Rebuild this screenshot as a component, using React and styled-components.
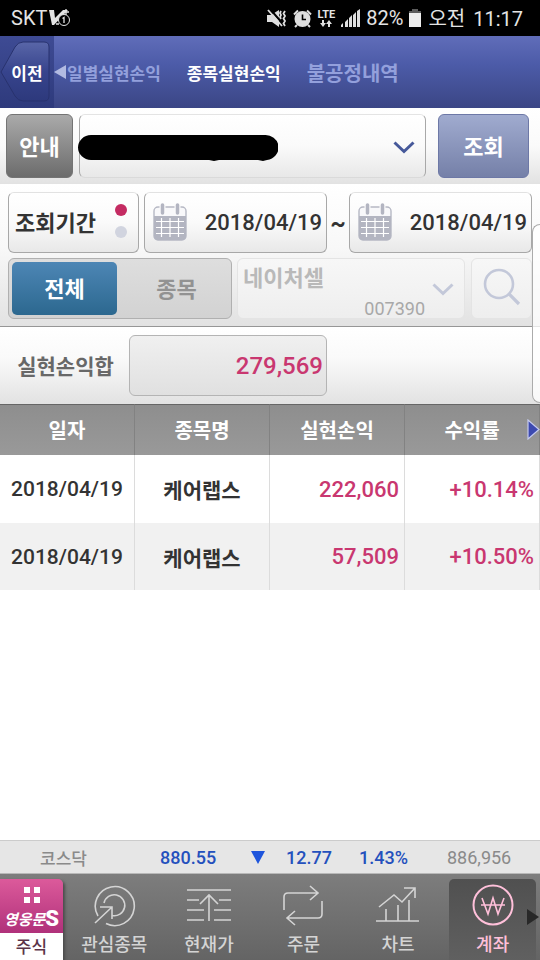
import React from "react";
import styled, { createGlobalStyle, css } from "styled-components";

const PageStyle = createGlobalStyle`
  *, *::before, *::after { box-sizing: border-box; }
  body { margin: 0; background: #fff; }
  body, button, input, select, a {
    font-family: Roboto, "Noto Sans CJK KR", sans-serif;
  }
  button, input, select { margin: 0; padding: 0; border: 0; background: none; }
  button { cursor: pointer; }
`;

const Screen = styled.div`
  min-height: 100vh;
  display: flex;
  flex-direction: column;
`;

/* ---------- status bar ---------- */

const StatusBar = styled.div`
  height: 36px;
  padding: 0 17px 0 11px;
  display: flex;
  align-items: center;
  justify-content: space-between;
  background: #000;
  color: #e4e4e4;
  font-size: 20px;
`;

const StatusGroup = styled.div`
  display: flex;
  align-items: center;
  gap: ${(p) => p.$gap}px;
`;

const Clock = styled.span`
  display: flex;
  align-items: baseline;
  gap: 8px;
  padding: 0 0 2px 1px;
  font-size: 20px;
`;

/* ---------- title bar ---------- */

const TitleBar = styled.header`
  height: 72px;
  display: flex;
  background: linear-gradient(#606db9, #4c5ba8 40%, #3b4685);
`;

const BackButton = styled.button`
  position: relative;
  width: 54px;
  background: linear-gradient(#3e4b94, #2e3a7c);
  color: #fff;
  font-size: 17px;
  font-weight: 700;
`;

const BackShape = styled.svg`
  position: absolute;
  inset: 0;
`;

const BackLabel = styled.span`
  position: relative;
`;

const Tabs = styled.nav`
  display: flex;
  align-items: center;
  gap: 26px;
`;

const Tab = styled.a`
  display: flex;
  align-items: center;
  color: ${(p) => (p.$active ? "#fff" : "#93a0dc")};
  font-size: ${(p) => (p.$wide ? 20 : 17)}px;
  font-weight: 700;
  text-decoration: none;
  white-space: nowrap;
`;

/* ---------- account bar ---------- */

const boxFrame = css`
  border: 1px solid #a8a8a8;
  border-radius: 6px;
  background: linear-gradient(#fff, #fafafa 50%, #e8e8e8);
`;

const AccountBar = styled.section`
  padding: 6px 11px 6px 6px;
  display: flex;
  background: linear-gradient(#fff, #fafafa 50%, #e2e2e2);
`;

const ActionButton = styled.button`
  width: ${(p) => p.$width}px;
  height: 64px;
  padding-bottom: 3px;
  border-radius: 6px;
  border: 1px solid ${(p) => (p.$primary ? "#6d78a6" : "#747474")};
  background: ${(p) =>
    p.$primary
      ? "linear-gradient(#a0abcf, #7580a8)"
      : "linear-gradient(#aaa, #6c6c6c)"};
  color: #fff;
  font-size: 22px;
  font-weight: 700;
`;

const AccountField = styled.div`
  position: relative;
  flex: 1;
  margin: 0 12px 0 6px;
  display: flex;
`;

const AccountSelect = styled.select`
  ${boxFrame}
  appearance: none;
  width: 100%;
  height: 64px;
  padding: 0 48px 0 12px;
  border-top-color: #e4e4e4;
  border-bottom-color: #dadada;
  font-size: 22px;
`;

const MaskedNumber = styled.svg`
  position: absolute;
  left: -1px;
  top: 20px;
`;

const FieldChevron = styled.svg`
  position: absolute;
  right: 11px;
  top: ${(p) => p.$top}px;
  pointer-events: none;
`;

/* ---------- search conditions ---------- */

const Conditions = styled.div`
  position: relative;
`;

const PeriodPanel = styled.section`
  padding: 8px 8px 7px;
  display: flex;
  flex-direction: column;
  gap: 5px;
  border-bottom: 1px solid #969696;
  background: linear-gradient(#fff, #f8f8f8 45%, #e2e2e2);
`;

const FieldRow = styled.div`
  display: flex;
  align-items: stretch;
  height: 61px;
`;

const PeriodButton = styled.button`
  ${boxFrame}
  width: 131px;
  margin-right: 5px;
  padding: 0 11px 3px 6px;
  border-top-color: #e2e2e2;
  display: flex;
  align-items: center;
  justify-content: space-between;
  color: #333;
  font-size: 22px;
  font-weight: 700;
`;

const DotPair = styled.span`
  display: flex;
  flex-direction: column;
  gap: 10px;
`;

const Dot = styled.span`
  width: 12px;
  height: 12px;
  border-radius: 50%;
  background: ${(p) => (p.$on ? "#c42b62" : "#d1d4df")};
`;

const DateField = styled.label`
  ${boxFrame}
  flex: 1;
  min-width: 0;
  padding: 0 4px 2px 8px;
  border-top-color: #e2e2e2;
  display: flex;
  align-items: center;
`;

const DateInput = styled.input`
  flex: 1;
  min-width: 0;
  padding-top: 2px;
  color: #333;
  font-size: 22px;
  font-weight: 500;
  text-align: right;
  outline: 0;
`;

const Tilde = styled.span`
  width: 22px;
  display: flex;
  align-items: center;
  justify-content: center;
  color: #333;
  font-size: 24px;
  font-weight: 700;
`;

const Segment = styled.div`
  width: 224px;
  padding: 3px;
  display: flex;
  border: 1px solid #b0b0b0;
  border-radius: 6px;
  background: linear-gradient(#dedede, #d2d2d2);
`;

const SegmentButton = styled.button`
  flex: ${(p) => (p.$on ? "0 0 105px" : "1")};
  padding-bottom: 3px;
  border-radius: 5px;
  background: ${(p) => (p.$on ? "linear-gradient(#4d86b5, #2c688f)" : "none")};
  color: ${(p) => (p.$on ? "#fff" : "#929292")};
  font-size: 22px;
  font-weight: 700;
`;

const SegmentText = styled.span`
  padding-left: ${(p) => p.$indent}px;
`;

const StockField = styled.div`
  position: relative;
  flex: 1;
  min-width: 0;
  margin: 0 6px 0 5px;
  display: flex;
`;

const faintFrame = css`
  border: 1px solid #e4e4e4;
  border-radius: 6px;
  background: linear-gradient(#f7f7f7, #eeeeee);
`;

const StockSelect = styled.select`
  ${faintFrame}
  appearance: none;
  width: 100%;
  padding: 0 48px 20px 5px;
  color: #b9b9b9;
  opacity: 1;
  font-size: 22px;
  font-weight: 700;
`;

const StockCode = styled.span`
  position: absolute;
  right: 40px;
  bottom: 0;
  color: #a8a8a8;
  font-size: 18px;
`;

const SearchButton = styled.button`
  ${faintFrame}
  width: 61px;
  padding-bottom: 3px;
  display: flex;
  align-items: center;
  justify-content: center;
`;

const SumPanel = styled.section`
  padding: 8px 0;
  display: flex;
  align-items: center;
  background: linear-gradient(#fff, #fafafa 40%, #e2e2e2);
`;

const SumLabel = styled.label`
  width: 129px;
  padding: 0 0 2px 2px;
  text-align: center;
  color: #686868;
  font-size: 21px;
  font-weight: 700;
`;

const SumValue = styled.output`
  width: 198px;
  height: 61px;
  padding: 0 3px;
  display: flex;
  align-items: center;
  justify-content: flex-end;
  border: 1px solid #b4b4b4;
  border-radius: 6px;
  background: linear-gradient(#f0f0f0, #e0e0e0);
  color: #c93770;
  font-size: 24px;
  font-weight: 500;
`;

const PanelHandle = styled.div`
  position: absolute;
  right: 0;
  top: 40px;
  bottom: 1px;
  width: 8px;
  border: 1px solid #ababab;
  border-right: 0;
  border-radius: 8px 0 0 8px;
  background: rgba(255, 255, 255, 0.75);
`;

/* ---------- table ---------- */

const TableArea = styled.main`
  position: relative;
  flex: 1;
`;

const ProfitTable = styled.table`
  width: 100%;
  table-layout: fixed;
  border-collapse: separate;
  border-spacing: 0;
`;

const HeadCell = styled.th`
  height: 51px;
  padding: 0 0 2px;
  border-top: 1px solid #666;
  border-right: 1px solid #828282;
  background: linear-gradient(#8e8e8e, #999);
  color: #fff;
  font-size: 20px;
  font-weight: 700;
`;

const BodyRow = styled.tr`
  background: ${(p) => (p.$shaded ? "#f1f1f1" : "#fff")};
`;

const Cell = styled.td`
  height: ${(p) => (p.$shaded ? 67 : 68)}px;
  padding: 0 5px;
  border-right: 1px solid #dcdcdc;
  text-align: ${(p) => (p.$amount ? "right" : "center")};
  color: ${(p) => (p.$amount ? "#c93770" : "#333")};
  font-size: ${(p) => (p.$small ? 21 : 22)}px;
  font-weight: ${(p) => (p.$bold ? 700 : 500)};
  white-space: nowrap;
`;

const NextColumns = styled.button`
  position: absolute;
  right: 0;
  top: 15px;
  display: flex;
`;

/* ---------- ticker ---------- */

const Ticker = styled.section`
  height: 34px;
  padding: 0 27px 0 40px;
  display: grid;
  grid-template-columns: 120fr 91fr 35fr 73fr 88fr 66fr;
  align-items: center;
  border-top: 1px solid #ccc;
  border-bottom: 1px solid #b8b8b8;
  background: #e6e6e6;
  color: #8a8a8a;
  font-size: 18px;
  white-space: nowrap;
`;

const TickerName = styled.span`
  font-size: 17px;
  font-weight: 500;
`;

const TickerValue = styled.span`
  color: #2450bd;
  font-weight: 500;
`;

/* ---------- bottom navigation ---------- */

const BottomNav = styled.nav`
  position: relative;
  height: 86px;
  padding-top: 5px;
  display: flex;
  background: linear-gradient(#7d7d7d, #646464);
`;

const HomeItem = styled.a`
  width: 63px;
  margin-right: 4px;
  display: flex;
  flex-direction: column;
  overflow: hidden;
  border-radius: 0 5px 0 0;
  box-shadow: 2px 2px 3px #4c4c4c;
  text-decoration: none;
`;

const HomeBrand = styled.span`
  height: 55px;
  padding-top: 8px;
  display: flex;
  flex-direction: column;
  align-items: center;
  background: linear-gradient(#dc5a9b, #b0317a);
  color: #fff;
`;

const BrandName = styled.span`
  display: flex;
  align-items: center;
  height: 30px;
  font-size: 15px;
  font-weight: 700;
  font-style: italic;
  white-space: nowrap;
`;

const BrandLetter = styled.b`
  font-size: 22px;
  font-style: normal;
`;

const HomeLabel = styled.span`
  flex: 1;
  padding-bottom: 2px;
  display: flex;
  align-items: center;
  justify-content: center;
  background: #fff;
  color: #5b3448;
  font-size: 17px;
  font-weight: 500;
`;

const NavItem = styled.a`
  flex: 1;
  min-width: 0;
  margin: 0 4px;
  padding-top: 4px;
  display: flex;
  flex-direction: column;
  align-items: center;
  gap: 5px;
  border-radius: 5px 5px 0 0;
  background: ${(p) => (p.$active ? "linear-gradient(#505050, #606060)" : "none")};
  color: ${(p) => (p.$active ? "#ffc0da" : "#d4d4d4")};
  font-size: 18px;
  font-weight: 500;
  line-height: 26px;
  text-decoration: none;
  white-space: nowrap;
`;

const NavMore = styled.svg`
  position: absolute;
  right: 0;
  top: 34px;
`;

/* ---------- icons ---------- */

const CarrierIcon = () => (
  <svg width="24" height="20" viewBox="0 0 24 20" fill="none" stroke="#e4e4e4">
    <path d="M1 2h5l1 8 8-8h5L6 17H4z" fill="#e4e4e4" stroke="none" />
    <circle cx="16" cy="12" r="5.500" fill="#000" strokeWidth="1" />
    <path d="M14.500 10.500 16 9.500V15M18 1v6M15 4h6M8 16h3" strokeWidth="1.300" />
  </svg>
);

const MuteIcon = () => (
  <svg width="20" height="19" viewBox="0 0 20 19" fill="none" stroke="#dedede">
    <path d="M0 6h4l8-5v17l-7-5H0z" fill="#dedede" stroke="none" />
    <path d="M3 0l13 15" stroke="#000" strokeWidth="2" />
    <path d="M1 1l14 16" strokeWidth="1.800" />
    <path d="M14 2l-1 2 1 2-1 2 1 2M18 2l-1.500 2.500L18 7l-1.500 2.500L18 12l-1.500 2.500L18 17" strokeWidth="1.800" />
  </svg>
);

const AlarmIcon = () => (
  <svg width="19" height="19" viewBox="0 0 19 19" fill="none" stroke="#dedede">
    <circle cx="9.500" cy="10" r="8" fill="#dedede" stroke="none" />
    <path d="M1 5.500 5 1.500M18 5.500 14 1.500M4 16l-2 2M15 16l2 2" strokeWidth="2" />
    <path d="M9.500 5.500V10.500H13" stroke="#000" strokeWidth="1.600" />
  </svg>
);

const LteMark = styled.span`
  display: flex;
  flex-direction: column;
  align-items: center;
  font-size: 11px;
  line-height: 11px;
  font-weight: 700;
`;

const LteArrows = () => (
  <svg width="12" height="7" viewBox="0 0 12 7" fill="#dedede">
    <path d="M2 0h2v3h2L3 7 0 3h2zM8 7h2V4h2L9 0 6 4h2z" />
  </svg>
);

const SignalIcon = () => (
  <svg width="19" height="18" viewBox="0 0 19 18" fill="#dedede">
    <path d="M0 18v-2l2-2v4zM4 18v-5l3-3v8zM8 18V9l3-3v12zM12 18V6l3-3v15zM16 18V2l3-2v18z" />
  </svg>
);

const BatteryIcon = () => (
  <svg width="12" height="18" viewBox="0 0 12 18">
    <path d="M3 0h6v2h3v2H0V2h3z" fill="#5c5c5c" />
    <path d="M0 4h12v14H0z" fill="#ededed" />
  </svg>
);

const LeftArrow = () => (
  <svg width="13" height="14" viewBox="0 0 13 14" fill="#b2bbe2">
    <path d="M0 7 12 0v14z" />
  </svg>
);

const Chevron = ({ top, color }) => (
  <FieldChevron $top={top} width="22" height="14" viewBox="0 0 22 14" fill="none">
    <path d="M1.500 1.500 11 10.500l9.500-9" stroke={color} strokeWidth="3" />
  </FieldChevron>
);

const CalendarIcon = () => (
  <svg width="34" height="38" viewBox="0 0 34 38" fill="none">
    <rect x="1" y="4" width="32" height="33" rx="4" fill="#f8f8fa" stroke="#b6b8c4" strokeWidth="1.400" />
    <path d="M1 13h32v20q0 4-4 4H5q-4 0-4-4z" fill="#b3b5c1" />
    <path d="M9.500 1v9M24.500 1v9" stroke="#fafafa" strokeWidth="6" />
    <path d="M9.500 2v8M24.500 2v8" stroke="#b3b5c1" strokeWidth="3.500" strokeLinecap="round" />
    <path d="M3 18.500h28M3 24.500h28M3 30.500h28M8.500 15v19M17 15v19M25.500 15v19" stroke="#fff" strokeWidth="1.200" />
  </svg>
);

const SearchIcon = () => (
  <svg width="38" height="38" viewBox="0 0 38 38" fill="none" stroke="#c3c8d9" strokeWidth="2.600">
    <circle cx="16" cy="16" r="14" />
    <path d="M26 26l10 10" strokeWidth="3.200" />
  </svg>
);

const RightPointer = () => (
  <svg width="13" height="21" viewBox="0 0 13 21">
    <path d="M1 1v19l11-9.500z" fill="#3d4ab0" stroke="#c5caee" strokeWidth="1.200" />
  </svg>
);

const DownTriangle = () => (
  <svg width="14" height="13" viewBox="0 0 14 13" fill="#1e55dc">
    <path d="M0 0h14L7 13z" />
  </svg>
);

const HomeDots = () => (
  <svg width="16" height="16" viewBox="0 0 16 16" fill="#fff">
    <path d="M0 0h6v6H0zM10 0h6v6h-6zM0 10h6v6H0zM10 10h6v6h-6z" />
  </svg>
);

const navIconPaths = {
  watch: (
    <>
      <path d="M6 33A19.500 19.500 0 1 1 14 40.500" />
      <path d="M12 20A10.500 10.500 0 1 1 20 32.500" />
      <path d="M3 40 20 24M8 24h12v12" />
    </>
  ),
  price: (
    <path d="M0 7h44M0 17h12M32 17h12M0 27h17M27 27h17M0 37h17M27 37h17M22 38V13M13 21l9-9 9 9" />
  ),
  order: (
    <>
      <path d="M3 27V14q0-4 4-4h30M29 3l8 7-8 7" />
      <path d="M41 18v13q0 4-4 4H6M14 28l-8 7 8 7" />
    </>
  ),
  chart: (
    <path d="M0 38h43M10 38V26M22 38V22M33 38V17M3 24 18 12l8 7L39 5M28 5h11v10" />
  ),
  account: (
    <>
      <circle cx="22" cy="22" r="19.500" strokeWidth="2" />
      <path d="M11 15l6 16 5-16 5 16 6-16M10 22h24" />
    </>
  ),
};

const NavIcon = ({ name }) => (
  <svg width="44" height="44" viewBox="0 0 44 44" fill="none" stroke="currentColor" strokeWidth="1.600">
    {navIconPaths[name]}
  </svg>
);

/* ---------- data ---------- */

const trades = [
  { date: "2018/04/19", name: "케어랩스", profit: "222,060", rate: "+10.14%" },
  { date: "2018/04/19", name: "케어랩스", profit: "57,509", rate: "+10.50%" },
];

const navItems = [
  { icon: "watch", label: "관심종목" },
  { icon: "price", label: "현재가" },
  { icon: "order", label: "주문" },
  { icon: "chart", label: "차트" },
  { icon: "account", label: "계좌", active: true },
];

export default function App() {
  return (
    <Screen lang="ko">
      <PageStyle />
      <StatusBar>
        <StatusGroup $gap={1}>
          <span>SKT</span>
          <CarrierIcon />
        </StatusGroup>
        <StatusGroup $gap={6}>
          <MuteIcon />
          <AlarmIcon />
          <LteMark>
            LTE
            <LteArrows />
          </LteMark>
          <SignalIcon />
          <span>82%</span>
          <BatteryIcon />
          <Clock>
            <span>오전</span>
            <span>11:17</span>
          </Clock>
        </StatusGroup>
      </StatusBar>

      <TitleBar>
        <BackButton type="button">
          <BackShape width="54" height="72" viewBox="0 0 54 72" fill="none">
            <defs>
              <linearGradient id="back" x1="0" y1="0" x2="0" y2="1">
                <stop offset="0" stopColor="#5966a8" />
                <stop offset="0.5" stopColor="#37448d" />
                <stop offset="1" stopColor="#2d397c" />
              </linearGradient>
            </defs>
            <path
              d="M1 36 15 11q3-5 8-5h21q5 0 5 5v49q0 5-5 5H23q-5 0-8-5z"
              fill="url(#back)"
              stroke="#28326e"
            />
          </BackShape>
          <BackLabel>이전</BackLabel>
        </BackButton>
        <Tabs>
          <Tab href="#daily">
            <LeftArrow />
            일별실현손익
          </Tab>
          <Tab href="#stock" $active aria-current="page">
            종목실현손익
          </Tab>
          <Tab href="#unfair" $wide>불공정내역</Tab>
        </Tabs>
      </TitleBar>

      <AccountBar>
        <ActionButton type="button" $width={67}>
          안내
        </ActionButton>
        <AccountField>
          <AccountSelect aria-label="계좌번호" />
          <MaskedNumber width="200" height="28" viewBox="0 0 200 28">
            <path d="M13 1H186a13 12.500 0 0 1 3 25l-4 1-5-1h-39l-5 1-5-1H13A13 12.500 0 0 1 13 1z" />
          </MaskedNumber>
          <Chevron top={27} color="#46599a" />
        </AccountField>
        <ActionButton type="button" $width={91} $primary>
          조회
        </ActionButton>
      </AccountBar>

      <Conditions>
        <PeriodPanel>
          <FieldRow>
            <PeriodButton type="button">
              조회기간
              <DotPair>
                <Dot $on />
                <Dot />
              </DotPair>
            </PeriodButton>
            <DateField>
              <CalendarIcon />
              <DateInput aria-label="시작일" defaultValue="2018/04/19" />
            </DateField>
            <Tilde>~</Tilde>
            <DateField>
              <CalendarIcon />
              <DateInput aria-label="종료일" defaultValue="2018/04/19" />
            </DateField>
          </FieldRow>
          <FieldRow>
            <Segment>
              <SegmentButton type="button" $on aria-pressed="true">
                전체
              </SegmentButton>
              <SegmentButton type="button" aria-pressed="false">
                <SegmentText $indent={8}>종목</SegmentText>
              </SegmentButton>
            </Segment>
            <StockField>
              <StockSelect aria-label="종목 선택" disabled>
                <option>네이처셀</option>
              </StockSelect>
              <StockCode>007390</StockCode>
              <Chevron top={25} color="#c3c8d9" />
            </StockField>
            <SearchButton type="button" aria-label="종목 검색" disabled>
              <SearchIcon />
            </SearchButton>
          </FieldRow>
        </PeriodPanel>
        <SumPanel>
          <SumLabel htmlFor="profit-sum">실현손익합</SumLabel>
          <SumValue id="profit-sum">279,569</SumValue>
        </SumPanel>
        <PanelHandle />
      </Conditions>

      <TableArea>
        <ProfitTable>
          <thead>
            <tr>
              <HeadCell scope="col">일자</HeadCell>
              <HeadCell scope="col">종목명</HeadCell>
              <HeadCell scope="col">실현손익</HeadCell>
              <HeadCell scope="col">수익률</HeadCell>
            </tr>
          </thead>
          <tbody>
            {trades.map((trade, i) => {
              const shaded = i % 2 === 1;
              return (
                <BodyRow key={i} $shaded={shaded}>
                  <Cell $shaded={shaded} $small>{trade.date}</Cell>
                  <Cell $shaded={shaded} $small $bold>{trade.name}</Cell>
                  <Cell $shaded={shaded} $amount>{trade.profit}</Cell>
                  <Cell $shaded={shaded} $amount>{trade.rate}</Cell>
                </BodyRow>
              );
            })}
          </tbody>
        </ProfitTable>
        <NextColumns type="button" aria-label="다음 항목">
          <RightPointer />
        </NextColumns>
      </TableArea>

      <Ticker>
        <TickerName>코스닥</TickerName>
        <TickerValue>880.55</TickerValue>
        <DownTriangle />
        <TickerValue>12.77</TickerValue>
        <TickerValue>1.43%</TickerValue>
        <span>886,956</span>
      </Ticker>

      <BottomNav>
        <HomeItem href="#home">
          <HomeBrand>
            <HomeDots />
            <BrandName>
              영웅문<BrandLetter>S</BrandLetter>
            </BrandName>
          </HomeBrand>
          <HomeLabel>주식</HomeLabel>
        </HomeItem>
        {navItems.map((item) => (
          <NavItem key={item.icon} href={`#${item.icon}`} $active={item.active}>
            <NavIcon name={item.icon} />
            {item.label}
          </NavItem>
        ))}
        <NavMore width="13" height="18" viewBox="0 0 13 18" fill="#282828">
          <path d="M0 1v16l12-8z" />
        </NavMore>
      </BottomNav>
    </Screen>
  );
}
